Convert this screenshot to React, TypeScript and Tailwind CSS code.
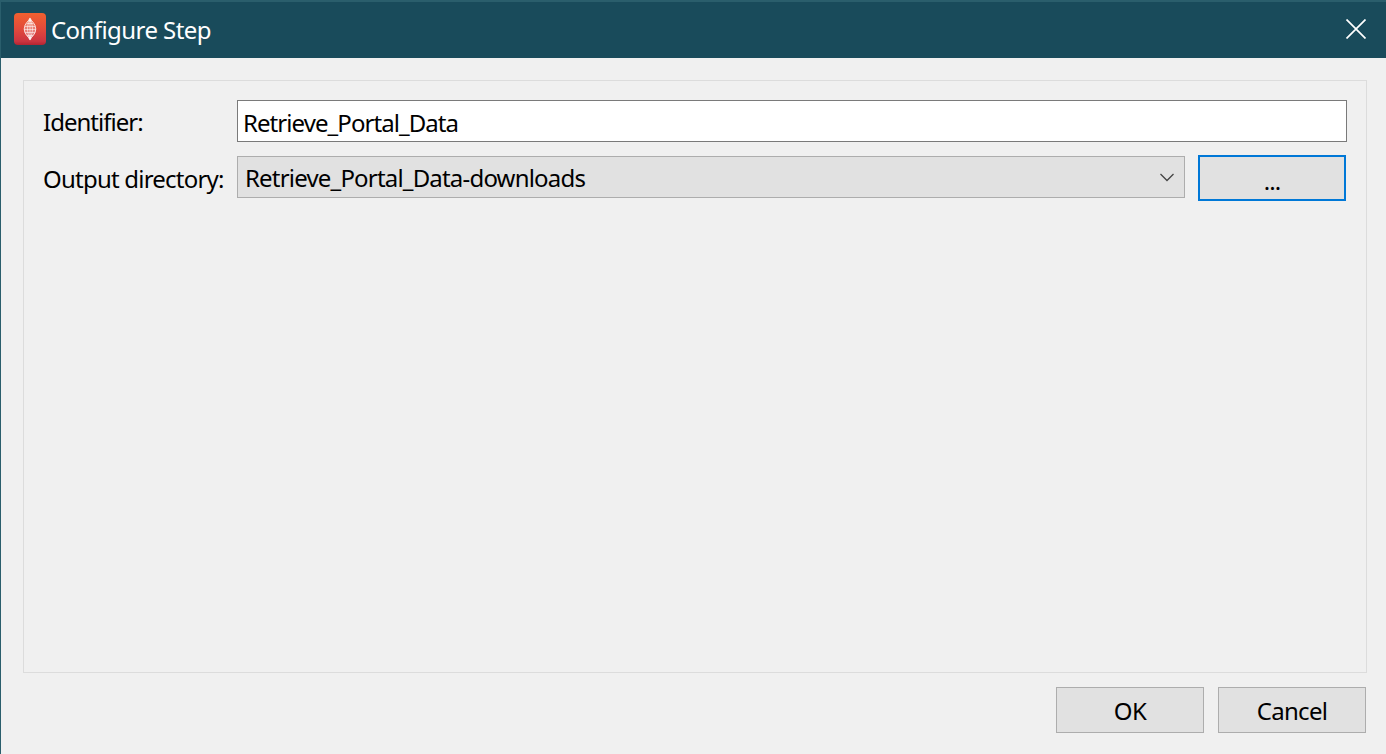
import React from "react";

function AppIcon() {
  return (
    <svg width="32" height="32" viewBox="0 0 32 32" className="block shrink-0">
      <defs>
        <linearGradient id="tile" x1="0" y1="0" x2="0" y2="1">
          <stop offset="0" stopColor="#f1602f" />
          <stop offset="0.5" stopColor="#e14a3c" />
          <stop offset="0.88" stopColor="#cc3541" />
          <stop offset="1" stopColor="#b32430" />
        </linearGradient>
      </defs>
      <rect width="32" height="32" rx="4" fill="url(#tile)" />
      <path
        d="M16 5.2C17.5 8.5 21.8 10.5 21.8 16S17.5 23.5 16 26.8C14.5 23.5 10.2 21.5 10.2 16S14.5 8.5 16 5.2Z"
        fill="#fff"
        fillOpacity="0.3"
        stroke="#fff"
        strokeOpacity="0.75"
        strokeWidth="1"
      />
      <g fill="none" stroke="#fff" strokeOpacity="0.6" strokeWidth="0.9">
        <path d="M16 7C19.3 12 19.3 20 16 25C12.7 20 12.7 12 16 7Z" />
        <path d="M16 6V26M13 10.5H19M11 13.5H21M10.2 16.5H21.8M11 19.5H21M13 22.5H19" />
      </g>
      <path d="M16 4.6L18 8.4H14ZM16 27.4L18 23.6H14Z" fill="#fff" fillOpacity="0.75" />
    </svg>
  );
}

const push =
  "h-[46px] w-[148px] shrink-0 border border-[#adadad] bg-[#e1e1e1] pt-[2px] text-center";

export default function App() {
  return (
    <div className="flex h-[754px] w-[1386px] flex-col overflow-hidden border-l border-[#2a5e6c] bg-[#f0f0f0] font-['Noto_Sans','Open_Sans',sans-serif] text-[24px] leading-[34px] whitespace-nowrap text-black">
      <header className="flex h-[58px] shrink-0 items-start border-t-2 border-[#2a5e6c] bg-[#194b5b] pl-[13px] text-white">
        <div className="pt-[11px]">
          <AppIcon />
        </div>
        <h1 className="pt-[11px] pl-[5px] tracking-[-0.57px]">Configure Step</h1>
        <button aria-label="Close" className="mt-[17px] mr-[20px] ml-auto">
          <svg width="20" height="20" viewBox="0 0 20 20" className="block">
            <path d="M0.5 0.5L19.5 19.5M19.5 0.5L0.5 19.5" stroke="#fff" strokeWidth="1.7" />
          </svg>
        </button>
      </header>

      <main className="mt-[22px] ml-[22px] h-[593px] w-[1344px] shrink-0 border border-[#dcdcdc] pt-[19px] pl-[19px]">
        <div className="flex h-[42px]">
          <label htmlFor="identifier" className="w-[194px] shrink-0 pt-[5px] tracking-[-0.98px]">
            Identifier:
          </label>
          <div id="identifier" className="h-[42px] w-[1110px] border border-[#7a7a7a] bg-white pt-[5px] pl-[5px] tracking-[-0.93px]">
            Retrieve_Portal_Data
          </div>
        </div>
        <div className="mt-[13px] flex h-[46px]">
          <label className="w-[194px] shrink-0 pt-[7px] tracking-[-0.78px]">Output directory:</label>
          <div className="mt-px flex h-[42px] w-[948px] items-start border border-[#adadad] bg-[#e1e1e1] pt-[4px] pl-[7px] tracking-[-0.81px]">
            Retrieve_Portal_Data-downloads
            <svg width="14" height="9" viewBox="0 0 14 9" className="mt-[12px] mr-[10px] ml-auto block">
              <path d="M0.5 1L7 7.5L13.5 1" fill="none" stroke="#444" strokeWidth="1.3" />
            </svg>
          </div>
          <button className="ml-[13px] h-[46px] w-[148px] shrink-0 border-2 border-[#0078d7] bg-[#e1e1e1] pt-[5px] text-center tracking-[-1px]">
            ...
          </button>
        </div>
      </main>

      <footer className="mt-[14px] mr-[20px] flex justify-end gap-[14px]">
        <button className={push + " tracking-[-0.6px]"}>OK</button>
        <button className={push + " tracking-[-0.7px]"}>Cancel</button>
      </footer>
    </div>
  );
}
